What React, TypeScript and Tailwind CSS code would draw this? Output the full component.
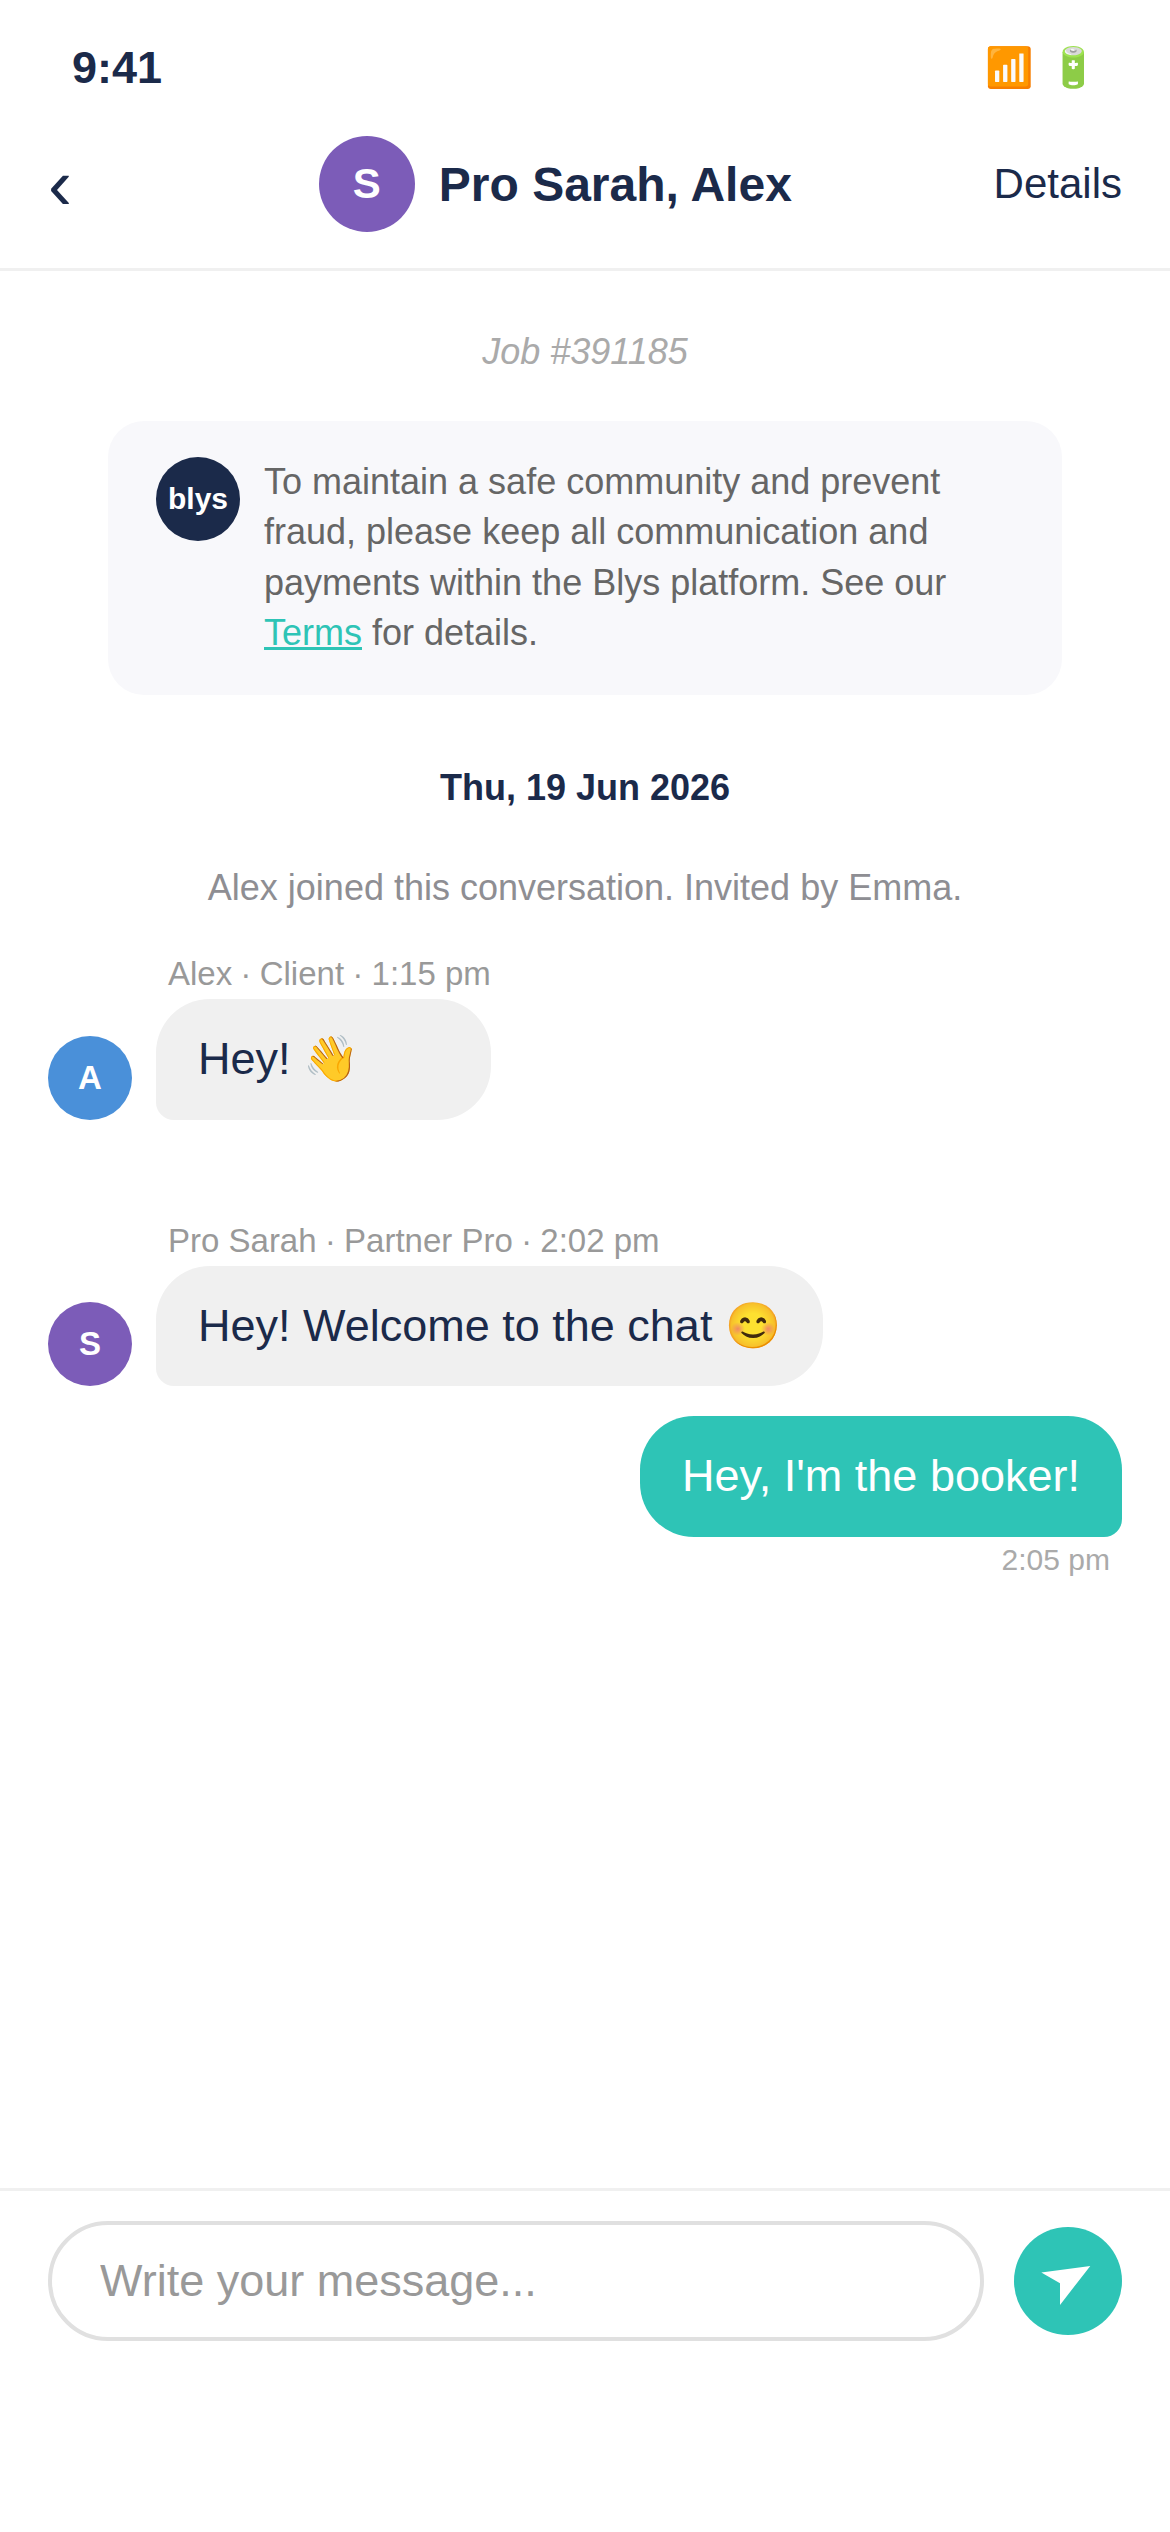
type Message = {
  id: number
  initial: string
  meta: string
  text: string
  color: string
}

const messages: Message[] = [
  { id: 1, initial: "A", meta: "Alex ∙ Client ∙ 1:15 pm", text: "Hey! 👋", color: "bg-[#4a90d9]" },
  { id: 2, initial: "S", meta: "Pro Sarah ∙ Partner Pro ∙ 2:02 pm", text: "Hey! Welcome to the chat 😊", color: "bg-[#7c5cb8]" },
]

function IncomingMessage({ message }: { message: Message }) {
  return (
    <div className="flex items-end gap-6">
      <div
        className={`flex size-[84px] shrink-0 items-center justify-center rounded-full text-[33px] font-bold text-white ${message.color}`}
      >
        {message.initial}
      </div>
      <div>
        <div className="mb-[6px] pl-3 text-[33px] leading-[38px] text-[#999999]">{message.meta}</div>
        <div className="rounded-[54px] rounded-bl-[18px] bg-[#f0f0f0] px-[42px] py-[30px] text-[45px] leading-[60.75px]">
          {message.text}
        </div>
      </div>
    </div>
  )
}

export default function App() {
  return (
    <div className="flex h-[2532px] w-[1170px] flex-col overflow-hidden bg-white font-['Liberation_Sans',Arial,sans-serif] leading-[normal] text-[#1b2a4a]">
      {/* Status bar */}
      <div className="flex h-[112px] shrink-0 items-center justify-between px-[72px] pt-6">
        <span className="text-[45px] leading-[52px] font-bold">9:41</span>
        <div className="flex gap-[15px] text-[39px] leading-[52px]">
          <span>📶</span>
          <span>🔋</span>
        </div>
      </div>

      {/* Header */}
      <header className="flex h-[159px] shrink-0 items-center justify-between border-b-[3px] border-[#f0f0f0] px-12 pt-6 pb-9">
        <button className="w-[69px] text-left text-[72px]">‹</button>
        <div className="flex items-center gap-6">
          <div className="flex size-24 items-center justify-center rounded-full bg-[#7c5cb8] text-[42px] font-bold text-white">
            S
          </div>
          <h1 className="text-[48px] font-bold">Pro Sarah, Alex</h1>
        </div>
        <button className="text-[42px]">Details</button>
      </header>

      {/* Conversation */}
      <main className="flex flex-1 flex-col px-12 pt-[60px]">
        <p className="text-center text-[36px] leading-[41px] text-[#aaaaaa] italic">Job #391185</p>

        <div className="mx-[60px] mt-[49px] flex items-start gap-6 rounded-[36px] bg-[#f8f8fb] px-12 py-9">
          <div className="flex size-[84px] shrink-0 items-center justify-center rounded-full bg-[#1b2a4a] text-[30px] font-bold text-white">
            blys
          </div>
          <p className="text-[36px] leading-[50.4px] text-[#666666]">
            To maintain a safe community and prevent fraud, please keep all communication and payments within the Blys
            platform. See our <span className="text-[#2ec4b6] underline">Terms</span> for details.
          </p>
        </div>

        <p className="mt-[72px] text-center text-[36px] leading-[41px] font-bold">Thu, 19 Jun 2026</p>
        <p className="mt-[59px] text-center text-[36px] leading-[41px] text-[#8e8e93]">
          Alex joined this conversation. Invited by Emma.
        </p>

        <div className="mt-[47.3px] flex flex-col gap-[102px]">
          {messages.map((message) => (
            <IncomingMessage key={message.id} message={message} />
          ))}
        </div>

        <div className="mt-[30px] flex flex-col items-end">
          <div className="rounded-[54px] rounded-br-[18px] bg-[#2ec4b6] px-[42px] py-[30px] text-[45px] leading-[60.75px] text-white">
            Hey, I'm the booker!
          </div>
          <span className="mt-[6px] pr-3 text-[30px] leading-[34px] text-[#aaaaaa]">2:05 pm</span>
        </div>
      </main>

      {/* Composer */}
      <footer className="flex h-[344px] shrink-0 items-start gap-[30px] border-t-[3px] border-[#f0f0f0] px-12 pt-[30px]">
        <input
          className="h-[120px] min-w-0 flex-1 rounded-[60px] border-4 border-[#e0e0e0] px-12 text-[45px] outline-none placeholder:text-[#999999]"
          placeholder="Write your message..."
        />
        <button aria-label="Send" className="mt-[6px] size-[108px] shrink-0 rounded-full bg-[#2ec4b6]">
          <svg viewBox="0 0 108 108" className="size-full" fill="#ffffff">
            <path d="M76.3 38.9 27.3 45.6 46 56.3V77.9Z" />
          </svg>
        </button>
      </footer>
    </div>
  )
}
